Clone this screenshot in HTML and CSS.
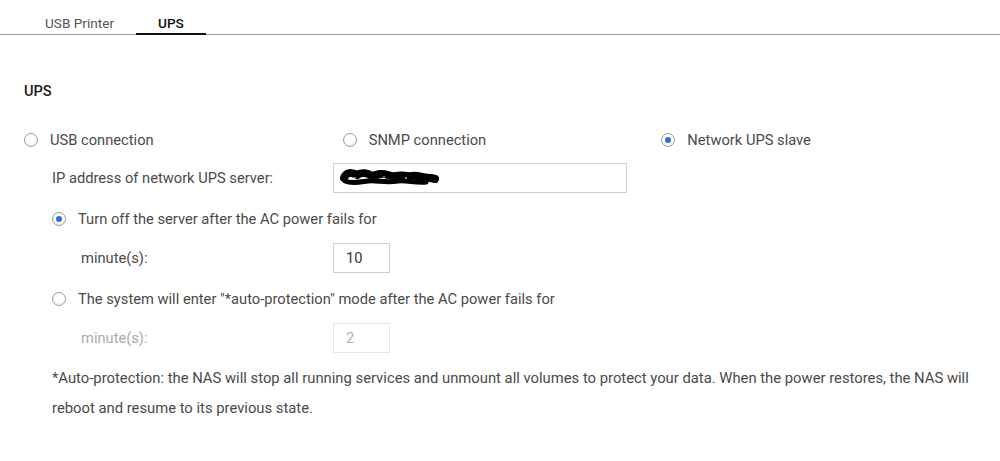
FILE: index.html
```html
<!DOCTYPE html>
<html lang="en">
<head>
    <meta charset="UTF-8">
    <meta name="viewport" content="width=device-width, initial-scale=1.0">
    <title>UPS</title>
    <link rel="stylesheet" href="styles.css">
</head>
<body>
    <div class="tabs">
        <div class="tab">USB Printer</div>
        <div class="tab active">UPS</div>
    </div>

    <div class="panel">
        <h2 class="section-title">UPS</h2>

        <div class="mode-row">
            <label class="radio mode"><input type="radio" name="mode"> USB connection</label>
            <label class="radio mode"><input type="radio" name="mode"> SNMP connection</label>
            <label class="radio mode"><input type="radio" name="mode" checked> Network UPS slave</label>
        </div>

        <div class="field-row ip-row">
            <span class="field-label">IP address of network UPS server:</span>
            <div class="text-box">
                <!-- redacted address -->
                <svg class="redact" width="100" height="20" viewBox="0 0 100 20">
                    <path d="M4 10 C6 4 12 4 17 7 C22 4 28 5 32 8 L40 6 C46 5 50 9 56 8 C62 6 66 9 72 8 C78 7 84 10 91 10 L95 11"
                          fill="none" stroke="#000" stroke-width="8" stroke-linecap="round" stroke-linejoin="round"/>
                    <path d="M5 13 C12 16 20 14 28 13 C36 12 46 15 58 13 C66 12 76 15 86 14" fill="none" stroke="#000" stroke-width="5" stroke-linecap="round"/>
                    <circle cx="15" cy="10" r="1" fill="#c9a233"/>
                    <circle cx="44" cy="9" r="1" fill="#5d8fd0"/>
                    <circle cx="66" cy="10" r="1" fill="#d6c36b"/>
                </svg>
            </div>
        </div>

        <label class="radio sub-option"><input type="radio" name="action" checked> Turn off the server after the AC power fails for</label>

        <div class="field-row minute-row">
            <span class="field-label">minute(s):</span>
            <input class="num-box" type="text" value="10">
        </div>

        <label class="radio sub-option"><input type="radio" name="action"> The system will enter "*auto-protection" mode after the AC power fails for</label>

        <div class="field-row minute-row disabled">
            <span class="field-label">minute(s):</span>
            <input class="num-box" type="text" value="2" disabled>
        </div>

        <p class="note">*Auto-protection: the NAS will stop all running services and unmount all volumes to protect your data. When the power restores, the NAS will reboot and resume to its previous state.</p>
    </div>
</body>
</html>
```

FILE: styles.css
```css
body {
    margin: 0;
    font-family: Roboto, "Liberation Sans", Arial, sans-serif;
    font-size: 14.7px;
    color: #4a4a4a;
    background: #fff;
}

/* tab strip */
.tabs {
    display: flex;
    height: 34px;
    padding-left: 23px;
    border-bottom: 1px solid #9a9a9a;
}

.tab {
    padding: 15px 22px 2px;
    margin-bottom: -1px;
    line-height: 16px;
    font-size: 13.6px;
    color: #555;
    border-bottom: 2px solid transparent;
}

.tab.active {
    color: #111;
    font-weight: 500;
    border-bottom-color: #111;
}

/* panel */
.panel {
    padding: 0 20px 0 24px;
}

.section-title {
    margin: 0;
    padding-top: 46px;
    line-height: 20px;
    font-size: 14.6px;
    font-weight: 500;
    color: #1b1b1b;
}

/* radios */
.radio {
    display: flex;
    align-items: center;
    height: 30px;
    line-height: 30px;
    color: #4a4a4a;
}

.radio input {
    -webkit-appearance: none;
    appearance: none;
    width: 14px;
    height: 14px;
    margin: 0 12px 0 0;
    border: 1px solid #9c9c9c;
    border-radius: 50%;
    background: radial-gradient(circle at 50% 40%, #fff 40%, #e6e6e6 100%);
    flex-shrink: 0;
    position: relative;
}

.radio input:checked::after {
    content: "";
    position: absolute;
    left: 3px;
    top: 3px;
    width: 6px;
    height: 6px;
    border-radius: 50%;
    background: #2d6fd9;
}

.mode-row {
    display: flex;
    margin-top: 24px;
}

.mode {
    width: 320px;
}

.sub-option {
    margin-top: 11px;
    padding-left: 28px;
}

/* label + input rows */
.field-row {
    display: flex;
    align-items: center;
    height: 30px;
}

.ip-row {
    margin-top: 8px;
    padding-left: 28px;
}

.ip-row .field-label {
    width: 281px;
}

.minute-row {
    margin-top: 9px;
    padding-left: 57px;
}

.minute-row .field-label {
    width: 252px;
}

.text-box {
    box-sizing: border-box;
    width: 294px;
    height: 30px;
    border: 1px solid #cfcfcf;
    display: flex;
    align-items: center;
    padding-left: 6px;
}

.redact {
    display: block;
}

.num-box {
    box-sizing: border-box;
    width: 57px;
    height: 30px;
    margin: 0;
    padding: 0 12px;
    border: 1px solid #cfcfcf;
    font-family: inherit;
    font-size: 14.6px;
    color: #333;
    background: #fff;
    outline: none;
}

.disabled .field-label {
    color: #aaa;
}

.num-box:disabled {
    border-color: #e6e6e6;
    color: #b0b0b0;
}

.note {
    margin: 10px 0 0;
    padding-left: 28px;
    line-height: 30px;
    font-size: 14.8px;
    color: #4a4a4a;
}
```
